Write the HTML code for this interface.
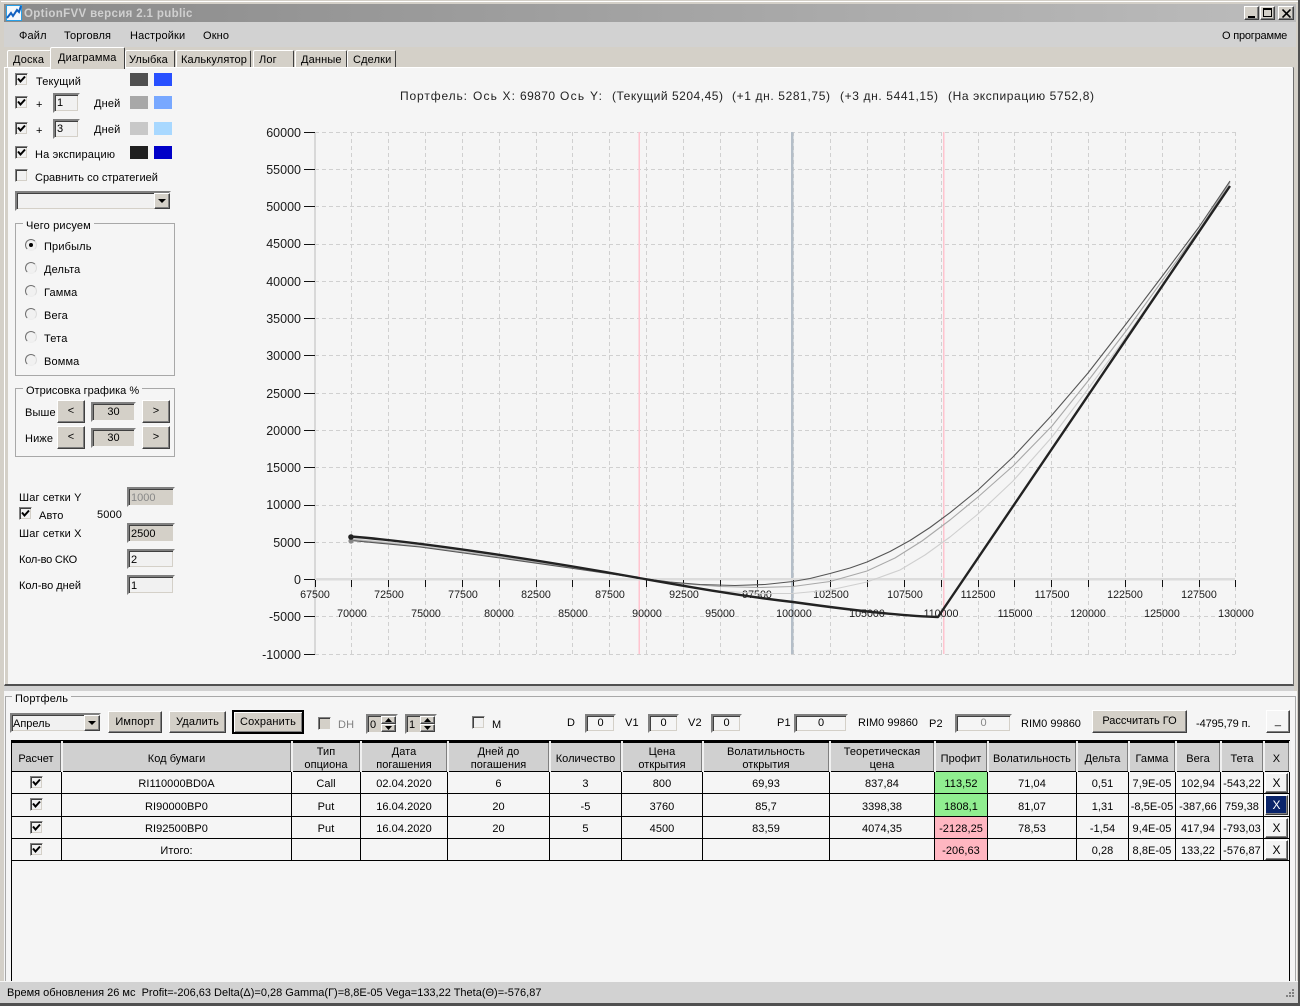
<!DOCTYPE html>
<html><head><meta charset="utf-8">
<style>
html,body{margin:0;padding:0;background:#f5f5f5}
#w{position:relative;width:1300px;height:1006px;overflow:hidden;background:#f5f5f5;font:11px "Liberation Sans",sans-serif;color:#000}
.a{position:absolute}
.t{position:absolute;white-space:nowrap;margin-top:1px;font:11px/13px "Liberation Sans",sans-serif;letter-spacing:.15px}
.i{position:absolute;box-sizing:border-box;background:#f1f1f1;border:2px solid;border-color:#808080 #f5f5f5 #f5f5f5 #808080;box-shadow:inset 1px 1px 0 #404040,inset -1px -1px 0 #d4d0c8;font:11px/17px "Liberation Sans",sans-serif;padding-left:2px;white-space:nowrap}
.b{position:absolute;box-sizing:border-box;background:#d4d0c8;border:1px solid;border-color:#fff #404040 #404040 #fff;box-shadow:inset -1px -1px 0 #808080;text-align:center;font:11px/20px "Liberation Sans",sans-serif;letter-spacing:.15px}
.cb{position:absolute;box-sizing:border-box;width:13px;height:13px;background:#f1f1f1;border:1px solid;border-color:#808080 #f5f5f5 #f5f5f5 #808080;box-shadow:inset 1px 1px 0 #404040,inset -1px -1px 0 #d4d0c8}
.cb svg{position:absolute;left:1px;top:1px}
.r{position:absolute;box-sizing:border-box;width:12px;height:12px;border-radius:50%;background:#f1f1f1;border:1px solid;border-color:#707070 #ddd #eee #707070}
.g{position:absolute;box-sizing:border-box;border:1px solid #a8a8a8}
.gl{position:absolute;background:#f5f5f5;padding:0 3px;margin-top:1px;white-space:nowrap;font:11px/13px "Liberation Sans",sans-serif;letter-spacing:.15px}
.tab{position:absolute;box-sizing:border-box;background:#d4d0c8;border:1px solid;border-color:#fff #404040 transparent #fff;border-left-color:#fff;border-radius:2px 2px 0 0}
.sw{position:absolute;width:18px;height:13px}
table{position:absolute;left:11px;top:741px;border-collapse:collapse;table-layout:fixed;width:1279px;font:11px "Liberation Sans",sans-serif}
td{border:1px solid #000;text-align:center;padding:0;white-space:nowrap;overflow:hidden;letter-spacing:.05px}
tr.h td{background:#d0d0d0;line-height:13px;border:0;border-right:2px solid #f0f0f0;box-shadow:inset -1px 0 0 #808080;border-top:2px solid #000;border-bottom:1px solid #000;padding-top:3px}
tr.h td div{margin-bottom:-1px}
tr.d td{height:18px;line-height:18px;padding-top:3px}
.G{background:#90ee90}.P{background:#ffb6c1}
.x{position:absolute;box-sizing:border-box;left:1265px;width:23px;height:20px;background:#f3f3f3;border:1px solid;border-color:#fff #404040 #404040 #fff;box-shadow:inset -1px -1px 0 #808080;text-align:center;font:12px/18px "Liberation Sans",sans-serif}
</style></head><body><div id="w">
<svg width="0" height="0" style="position:absolute"><defs><symbol id="ck" viewBox="0 0 9 9"><path d="M1 3.5L3.5 6.5L8 1.5" fill="none" stroke="#000" stroke-width="2"/></symbol></defs></svg>

<!-- chrome -->
<div class="a" style="left:0;top:0;width:1300px;height:1006px;background:#d4d0c8"></div>
<div class="a" style="left:1px;top:1px;width:1298px;height:1px;background:#fff"></div>
<div class="a" style="left:1298px;top:0;width:2px;height:1006px;background:#505050"></div>
<div class="a" style="left:0;top:1003px;width:1300px;height:3px;background:#505050"></div>
<div class="a" style="left:4px;top:4px;width:1292px;height:18px;background:linear-gradient(90deg,#8a8a8a,#bcbcbc)"></div>
<svg class="a" style="left:6px;top:5px" width="16" height="16"><rect width="16" height="16" fill="#28a0e8"/><rect x="1" y="1" width="14" height="14" fill="#f4f8fc"/><path d="M1 13L5 8L7 11L11 5L13 7L15 1" fill="none" stroke="#1060c0" stroke-width="2"/></svg>
<div class="t" style="left:24px;top:7px;font-weight:bold;font-size:11.5px;color:#d0d0d0;letter-spacing:.35px">OptionFVV версия 2.1 public</div>
<div class="b" style="left:1244px;top:6px;width:15px;height:14px"><div class="a" style="left:3px;top:9px;width:7px;height:2px;background:#000"></div></div>
<div class="b" style="left:1260px;top:6px;width:15px;height:14px"><div class="a" style="left:2px;top:1px;width:9px;height:9px;box-sizing:border-box;border:1px solid #000;border-top-width:2px"></div></div>
<div class="b" style="left:1278px;top:6px;width:16px;height:14px"><svg class="a" style="left:3px;top:2px" width="9" height="9"><path d="M0.5 0.5L8.5 8.5M8.5 0.5L0.5 8.5" stroke="#000" stroke-width="1.6"/></svg></div>
<div class="a" style="left:4px;top:22px;width:1292px;height:25px;background:#d2d2d2"></div>
<div class="t" style="left:19px;top:29px">Файл</div>
<div class="t" style="left:64px;top:29px">Торговля</div>
<div class="t" style="left:130px;top:29px">Настройки</div>
<div class="t" style="left:203px;top:29px">Окно</div>
<div class="t" style="left:1222px;top:29px;letter-spacing:-.2px">О программе</div>

<!-- tabs -->
<div class="tab" style="left:7px;top:50px;width:44px;height:18px"></div>
<div class="tab" style="left:125px;top:50px;width:50px;height:18px"></div>
<div class="tab" style="left:176px;top:50px;width:75px;height:18px"></div>
<div class="tab" style="left:253px;top:50px;width:41px;height:18px"></div>
<div class="tab" style="left:295px;top:50px;width:52px;height:18px"></div>
<div class="tab" style="left:347px;top:50px;width:49px;height:18px"></div>
<div class="t" style="left:13px;top:53px">Доска</div>
<div class="t" style="left:129px;top:53px">Улыбка</div>
<div class="t" style="left:181px;top:53px">Калькулятор</div>
<div class="t" style="left:259px;top:53px">Лог</div>
<div class="t" style="left:301px;top:53px">Данные</div>
<div class="t" style="left:353px;top:53px">Сделки</div>

<!-- main panel -->
<div class="a" style="left:4px;top:67px;width:1290px;height:619px;box-sizing:border-box;background:#d4d0c8;border-top:1px solid #fff;border-left:1px solid #fff;border-right:2px solid #707070;border-bottom:2px solid #505050"></div>
<div class="a" style="left:8px;top:68px;width:1285px;height:616px;background:#f5f5f5"></div>
<div class="tab" style="left:50px;top:47px;width:75px;height:22px;border-bottom:0;z-index:2"></div>
<div class="t" style="left:58px;top:51px;z-index:3">Диаграмма</div>

<!-- left options -->
<div class="cb" style="left:15px;top:73px"><svg width="9" height="9"><use href="#ck"/></svg></div>
<div class="t" style="left:36px;top:75px">Текущий</div>
<div class="sw" style="left:130px;top:73px;background:#505050"></div><div class="sw" style="left:154px;top:73px;background:#2850ff"></div>
<div class="cb" style="left:15px;top:96px"><svg width="9" height="9"><use href="#ck"/></svg></div>
<div class="t" style="left:36px;top:98px">+</div>
<div class="i" style="left:53px;top:93px;width:27px;height:20px">1</div>
<div class="t" style="left:94px;top:97px">Дней</div>
<div class="sw" style="left:130px;top:96px;background:#a8a8a8"></div><div class="sw" style="left:154px;top:96px;background:#78a8ff"></div>
<div class="cb" style="left:15px;top:122px"><svg width="9" height="9"><use href="#ck"/></svg></div>
<div class="t" style="left:36px;top:124px">+</div>
<div class="i" style="left:53px;top:119px;width:27px;height:20px">3</div>
<div class="t" style="left:94px;top:123px">Дней</div>
<div class="sw" style="left:130px;top:122px;background:#c8c8c8"></div><div class="sw" style="left:154px;top:122px;background:#a8d8ff"></div>
<div class="cb" style="left:15px;top:146px"><svg width="9" height="9"><use href="#ck"/></svg></div>
<div class="t" style="left:35px;top:148px">На экспирацию</div>
<div class="sw" style="left:130px;top:146px;background:#202020"></div><div class="sw" style="left:154px;top:146px;background:#0000c8"></div>
<div class="cb" style="left:15px;top:169px"></div>
<div class="t" style="left:35px;top:171px;letter-spacing:0">Сравнить со стратегией</div>
<div class="i" style="left:15px;top:191px;width:156px;height:20px"></div>
<div class="b" style="left:154px;top:193px;width:16px;height:16px"><svg class="a" style="left:3px;top:5px" width="9" height="5"><path d="M0 0H8L4 4Z"/></svg></div>

<div class="g" style="left:15px;top:223px;width:160px;height:153px"></div>
<div class="gl" style="left:23px;top:219px">Чего рисуем</div>
<div class="r" style="left:25px;top:239px"><div class="a" style="left:3px;top:3px;width:4px;height:4px;border-radius:50%;background:#000"></div></div>
<div class="t" style="left:44px;top:240px">Прибыль</div>
<div class="r" style="left:25px;top:262px"></div><div class="t" style="left:44px;top:263px">Дельта</div>
<div class="r" style="left:25px;top:285px"></div><div class="t" style="left:44px;top:286px">Гамма</div>
<div class="r" style="left:25px;top:308px"></div><div class="t" style="left:44px;top:309px">Вега</div>
<div class="r" style="left:25px;top:331px"></div><div class="t" style="left:44px;top:332px">Тета</div>
<div class="r" style="left:25px;top:354px"></div><div class="t" style="left:44px;top:355px">Вомма</div>

<div class="g" style="left:15px;top:388px;width:160px;height:69px"></div>
<div class="gl" style="left:23px;top:384px;letter-spacing:0">Отрисовка графика %</div>
<div class="t" style="left:25px;top:406px">Выше</div>
<div class="b" style="left:57px;top:400px;width:28px;height:23px">&lt;</div>
<div class="i" style="left:91px;top:402px;width:45px;height:20px;background:#d4d0c8;text-align:center;padding:0">30</div>
<div class="b" style="left:142px;top:400px;width:28px;height:23px">&gt;</div>
<div class="t" style="left:25px;top:432px">Ниже</div>
<div class="b" style="left:57px;top:426px;width:28px;height:23px">&lt;</div>
<div class="i" style="left:91px;top:428px;width:45px;height:20px;background:#d4d0c8;text-align:center;padding:0">30</div>
<div class="b" style="left:142px;top:426px;width:28px;height:23px">&gt;</div>

<div class="t" style="left:19px;top:491px">Шаг сетки Y</div>
<div class="i" style="left:127px;top:487px;width:48px;height:20px;background:#d4d0c8;color:#888;line-height:18px">1000</div>
<div class="cb" style="left:19px;top:507px"><svg width="9" height="9"><use href="#ck"/></svg></div>
<div class="t" style="left:39px;top:509px">Авто</div>
<div class="t" style="left:97px;top:508px">5000</div>
<div class="t" style="left:19px;top:527px">Шаг сетки X</div>
<div class="i" style="left:127px;top:523px;width:48px;height:20px;background:#d4d0c8;line-height:18px">2500</div>
<div class="t" style="left:19px;top:553px;letter-spacing:-.2px">Кол-во СКО</div>
<div class="i" style="left:127px;top:549px;width:48px;height:20px;line-height:18px">2</div>
<div class="t" style="left:19px;top:579px;letter-spacing:0">Кол-во дней</div>
<div class="i" style="left:127px;top:575px;width:48px;height:20px;line-height:18px">1</div>

<!-- chart -->
<svg class="a" style="left:0;top:0" width="1300" height="686" font-family="Liberation Sans" fill="#222">
<g stroke="#d0d0d0" stroke-dasharray="4 3" stroke-width="1" fill="none" shape-rendering="crispEdges">
<path d="M315 132.5H1235M315 169.5H1235M315 206.5H1235M315 244.5H1235M315 281.5H1235M315 318.5H1235M315 355.5H1235M315 393.5H1235M315 430.5H1235M315 467.5H1235M315 505.5H1235M315 542.5H1235M315 616.5H1235M315 654.5H1235"/>
<path d="M351.5 132V654M388.5 132V654M425.5 132V654M462.5 132V654M499.5 132V654M536.5 132V654M572.5 132V654M609.5 132V654M646.5 132V654M683.5 132V654M720.5 132V654M757.5 132V654M793.5 132V654M830.5 132V654M867.5 132V654M904.5 132V654M941.5 132V654M978.5 132V654M1014.5 132V654M1051.5 132V654M1088.5 132V654M1125.5 132V654M1162.5 132V654M1199.5 132V654M1235.5 132V654"/>
</g>
<rect x="638.5" y="132" width="1.5" height="522" fill="#ffc4cf"/>
<rect x="943" y="132" width="1.5" height="522" fill="#ffc4cf"/>
<rect x="791" y="132" width="2.5" height="522" fill="#b4bec8"/>
<rect x="314" y="132" width="2" height="522" fill="#d8d8d8"/>
<rect x="315" y="578" width="920" height="2.5" fill="#dcdcdc"/>
<g stroke="#111" stroke-width="1" shape-rendering="crispEdges">
<path d="M304 132.5H315M304 169.5H315M304 206.5H315M304 244.5H315M304 281.5H315M304 318.5H315M304 355.5H315M304 393.5H315M304 430.5H315M304 467.5H315M304 505.5H315M304 542.5H315M304 579.5H315M304 616.5H315M304 654.5H315"/>
<path d="M315.5 580V587M351.5 580V587M388.5 580V587M425.5 580V587M462.5 580V587M499.5 580V587M536.5 580V587M572.5 580V587M609.5 580V587M646.5 580V587M683.5 580V587M720.5 580V587M757.5 580V587M793.5 580V587M830.5 580V587M867.5 580V587M904.5 580V587M941.5 580V587M978.5 580V587M1014.5 580V587M1051.5 580V587M1088.5 580V587M1125.5 580V587M1162.5 580V587M1199.5 580V587M1235.5 580V587"/>
</g>
<g font-size="12.5" text-anchor="end" fill="#1a1a1a">
<text x="301" y="137">60000</text><text x="301" y="174">55000</text><text x="301" y="211">50000</text><text x="301" y="248">45000</text><text x="301" y="286">40000</text><text x="301" y="323">35000</text><text x="301" y="360">30000</text><text x="301" y="398">25000</text><text x="301" y="435">20000</text><text x="301" y="472">15000</text><text x="301" y="509">10000</text><text x="301" y="547">5000</text><text x="301" y="584">0</text><text x="301" y="621">-5000</text><text x="301" y="659">-10000</text>
</g>
<g font-size="10.7" text-anchor="middle" fill="#1a1a1a">
<text x="315" y="598">67500</text><text x="389" y="598">72500</text><text x="463" y="598">77500</text><text x="536" y="598">82500</text><text x="610" y="598">87500</text><text x="684" y="598">92500</text><text x="757" y="598">97500</text><text x="831" y="598">102500</text><text x="905" y="598">107500</text><text x="978" y="598">112500</text><text x="1052" y="598">117500</text><text x="1125" y="598">122500</text><text x="1199" y="598">127500</text>
<text x="352" y="617">70000</text><text x="426" y="617">75000</text><text x="499" y="617">80000</text><text x="573" y="617">85000</text><text x="647" y="617">90000</text><text x="720" y="617">95000</text><text x="794" y="617">100000</text><text x="867" y="617">105000</text><text x="941" y="617">110000</text><text x="1015" y="617">115000</text><text x="1088" y="617">120000</text><text x="1162" y="617">125000</text><text x="1236" y="617">130000</text>
</g>
<g font-size="12" fill="#222" lengthAdjust="spacing">
<text x="400" y="100" textLength="67">Портфель:</text>
<text x="473" y="100" textLength="42">Ось X:</text>
<text x="520" y="100" textLength="35">69870</text>
<text x="560" y="100" textLength="42">Ось Y:</text>
<text x="612" y="100" textLength="111">(Текущий 5204,45)</text>
<text x="732" y="100" textLength="98">(+1 дн. 5281,75)</text>
<text x="840" y="100" textLength="98">(+3 дн. 5441,15)</text>
<text x="948" y="100" textLength="146">(На экспирацию 5752,8)</text>
</g>
<g fill="none" stroke-linejoin="round">
<polyline stroke="#cfcfcf" stroke-width="1.1" points="351,538.5 420,545.5 500,556 570,567 639,578 680,586 720,591 760,593.5 793,593.5 830,590 867,582 900,570 925,555 950,537 978,514 1013,481 1052,437 1088,389 1126,337 1162,285 1199,232 1230,183"/>
<polyline stroke="#a8a8a8" stroke-width="1.1" points="351,539.5 420,546.5 500,557 570,567.500 639,578 680,583.500 720,586.500 760,587.500 793,586.500 830,581.500 867,571 895,558 922,541 950,520 978,497 1013,466 1052,426 1088,381 1126,331 1162,281 1199,230 1230,182"/>
<polyline stroke="#555" stroke-width="1.1" points="351,540.5 420,547 500,558 570,568 639,578 670,582 700,584.500 735,585.500 765,584.500 793,581.500 810,578.500 830,573.500 850,568 867,562 890,551.500 910,540.500 930,527.500 950,512.700 978,490 1013,457 1052,415 1088,373 1126,324 1162,276.500 1199,227 1230,181"/>
<path stroke="#222" stroke-width="2.4" d="M351 536.5C420 542 540 560 639 578C690 587 740 596 793 602C850 610 900 616 938 617L1230 186"/>
</g>
<circle cx="351" cy="541" r="2.6" fill="#888"/>
<circle cx="351" cy="537" r="2.8" fill="#222"/>
</svg>

<!-- portfolio -->
<div class="a" style="left:4px;top:686px;width:1290px;height:5px;background:#d2d2d2"></div>
<div class="a" style="left:4px;top:691px;width:1293px;height:290px;background:#f5f5f5"></div>
<div class="a" style="left:5px;top:696px;width:1291px;height:286px;box-sizing:border-box;border:1px solid #a8a8a8;border-bottom:0"></div>
<div class="gl" style="left:12px;top:692px">Портфель</div>

<div class="i" style="left:10px;top:713px;width:91px;height:20px;padding-left:1px;line-height:18px">Апрель</div>
<div class="b" style="left:84px;top:715px;width:16px;height:16px"><svg class="a" style="left:3px;top:5px" width="9" height="5"><path d="M0 0H8L4 4Z"/></svg></div>
<div class="b" style="left:108px;top:711px;width:54px;height:22px">Импорт</div>
<div class="b" style="left:169px;top:711px;width:57px;height:22px">Удалить</div>
<div class="b" style="left:232px;top:710px;width:72px;height:24px;border:2px solid #000;box-shadow:inset 1px 1px 0 #fff,inset -1px -1px 0 #808080">Сохранить</div>
<div class="cb" style="left:318px;top:717px;background:#d4d0c8"></div>
<div class="t" style="left:338px;top:718px;color:#808080">DH</div>
<div class="i" style="left:366px;top:714px;width:32px;height:20px;background:#d4d0c8;line-height:18px">0</div>
<div class="b" style="left:381px;top:716px;width:15px;height:8px"><svg class="a" style="left:3px;top:1px" width="7" height="4"><path d="M3.500 0L7 4H0Z"/></svg></div>
<div class="b" style="left:381px;top:724px;width:15px;height:8px"><svg class="a" style="left:3px;top:1px" width="7" height="4"><path d="M0 0H7L3.500 4Z"/></svg></div>
<div class="i" style="left:405px;top:714px;width:32px;height:20px;background:#d4d0c8;line-height:18px">1</div>
<div class="b" style="left:420px;top:716px;width:15px;height:8px"><svg class="a" style="left:3px;top:1px" width="7" height="4"><path d="M3.500 0L7 4H0Z"/></svg></div>
<div class="b" style="left:420px;top:724px;width:15px;height:8px"><svg class="a" style="left:3px;top:1px" width="7" height="4"><path d="M0 0H7L3.500 4Z"/></svg></div>
<div class="cb" style="left:472px;top:716px"></div>
<div class="t" style="left:492px;top:718px">M</div>
<div class="t" style="left:567px;top:716px">D</div>
<div class="i" style="left:585px;top:714px;width:31px;height:19px;text-align:center;padding:0;background:#f5f5f5;line-height:15px">0</div>
<div class="t" style="left:625px;top:716px">V1</div>
<div class="i" style="left:648px;top:714px;width:31px;height:19px;text-align:center;padding:0;background:#f5f5f5;line-height:15px">0</div>
<div class="t" style="left:688px;top:716px">V2</div>
<div class="i" style="left:711px;top:714px;width:31px;height:19px;text-align:center;padding:0;background:#f5f5f5;line-height:15px">0</div>
<div class="t" style="left:777px;top:716px">P1</div>
<div class="i" style="left:794px;top:714px;width:54px;height:19px;text-align:center;padding:0;background:#f5f5f5;line-height:15px">0</div>
<div class="t" style="left:858px;top:716px;letter-spacing:0">RIM0 99860</div>
<div class="t" style="left:929px;top:717px">P2</div>
<div class="i" style="left:955px;top:714px;width:57px;height:19px;text-align:center;padding:0;background:#f5f5f5;color:#888;line-height:15px">0</div>
<div class="t" style="left:1021px;top:717px;letter-spacing:0">RIM0 99860</div>
<div class="b" style="left:1092px;top:710px;width:95px;height:23px;letter-spacing:0">Рассчитать ГО</div>
<div class="t" style="left:1196px;top:717px;letter-spacing:-.1px">-4795,79 п.</div>
<div class="b" style="left:1266px;top:710px;width:24px;height:23px;background:#f5f5f5">_</div>

<!-- table -->
<div class="a" style="left:11px;top:740px;width:1279px;height:241px;box-sizing:border-box;border-left:1px solid #000;border-right:1px solid #000;border-top:2px solid #000"></div>
<table>
<colgroup><col style="width:50px"><col style="width:230px"><col style="width:69px"><col style="width:87px"><col style="width:102px"><col style="width:72px"><col style="width:81px"><col style="width:127px"><col style="width:105px"><col style="width:53px"><col style="width:89px"><col style="width:52px"><col style="width:47px"><col style="width:45px"><col style="width:43px"><col style="width:26px"></colgroup>
<tr class="h"><td><div>Расчет</div></td><td><div>Код бумаги</div></td><td><div>Тип<br>опциона</div></td><td><div>Дата<br>погашения</div></td><td><div>Дней до<br>погашения</div></td><td><div>Количество</div></td><td><div>Цена<br>открытия</div></td><td><div>Волатильность<br>открытия</div></td><td><div>Теоретическая<br>цена</div></td><td><div>Профит</div></td><td><div>Волатильность</div></td><td><div>Дельта</div></td><td><div>Гамма</div></td><td><div>Вега</div></td><td><div>Тета</div></td><td><div>X</div></td></tr>
<tr class="d"><td></td><td>RI110000BD0A</td><td>Call</td><td>02.04.2020</td><td>6</td><td>3</td><td>800</td><td>69,93</td><td>837,84</td><td class="G">113,52</td><td>71,04</td><td>0,51</td><td>7,9E-05</td><td>102,94</td><td>-543,22</td><td></td></tr>
<tr class="d"><td style="height:19px"></td><td>RI90000BP0</td><td>Put</td><td>16.04.2020</td><td>20</td><td>-5</td><td>3760</td><td>85,7</td><td>3398,38</td><td class="G">1808,1</td><td>81,07</td><td>1,31</td><td>-8,5E-05</td><td>-387,66</td><td>759,38</td><td></td></tr>
<tr class="d"><td></td><td>RI92500BP0</td><td>Put</td><td>16.04.2020</td><td>20</td><td>5</td><td>4500</td><td>83,59</td><td>4074,35</td><td class="P">-2128,25</td><td>78,53</td><td>-1,54</td><td>9,4E-05</td><td>417,94</td><td>-793,03</td><td></td></tr>
<tr class="d"><td></td><td>Итого:</td><td></td><td></td><td></td><td></td><td></td><td></td><td></td><td class="P">-206,63</td><td></td><td>0,28</td><td>8,8E-05</td><td>133,22</td><td>-576,87</td><td></td></tr>
</table>
<div class="cb" style="left:30px;top:776px"><svg width="9" height="9"><use href="#ck"/></svg></div>
<div class="cb" style="left:30px;top:798px"><svg width="9" height="9"><use href="#ck"/></svg></div>
<div class="cb" style="left:30px;top:821px"><svg width="9" height="9"><use href="#ck"/></svg></div>
<div class="cb" style="left:30px;top:843px"><svg width="9" height="9"><use href="#ck"/></svg></div>
<div class="x" style="top:773px">X</div>
<div class="x" style="top:795px;background:#0a246a;color:#fff">X</div>
<div class="x" style="top:818px">X</div>
<div class="x" style="top:840px">X</div>

<!-- status -->
<div class="a" style="left:0;top:981px;width:1298px;height:22px;background:#d2d2d2;border-top:1px solid #f5f5f5;box-sizing:border-box"></div>
<div class="t" style="left:7px;top:986px;font-size:11px;letter-spacing:0">Время обновления 26 мс &nbsp;Profit=-206,63 Delta(Δ)=0,28 Gamma(Г)=8,8E-05 Vega=133,22 Theta(Θ)=-576,87</div>
<svg class="a" style="left:1282px;top:988px" width="14" height="14" fill="#808080"><rect x="10" y="1" width="2" height="2"/><rect x="7" y="4" width="2" height="2"/><rect x="10" y="4" width="2" height="2"/><rect x="4" y="7" width="2" height="2"/><rect x="7" y="7" width="2" height="2"/><rect x="10" y="7" width="2" height="2"/></svg>
</div></body></html>
